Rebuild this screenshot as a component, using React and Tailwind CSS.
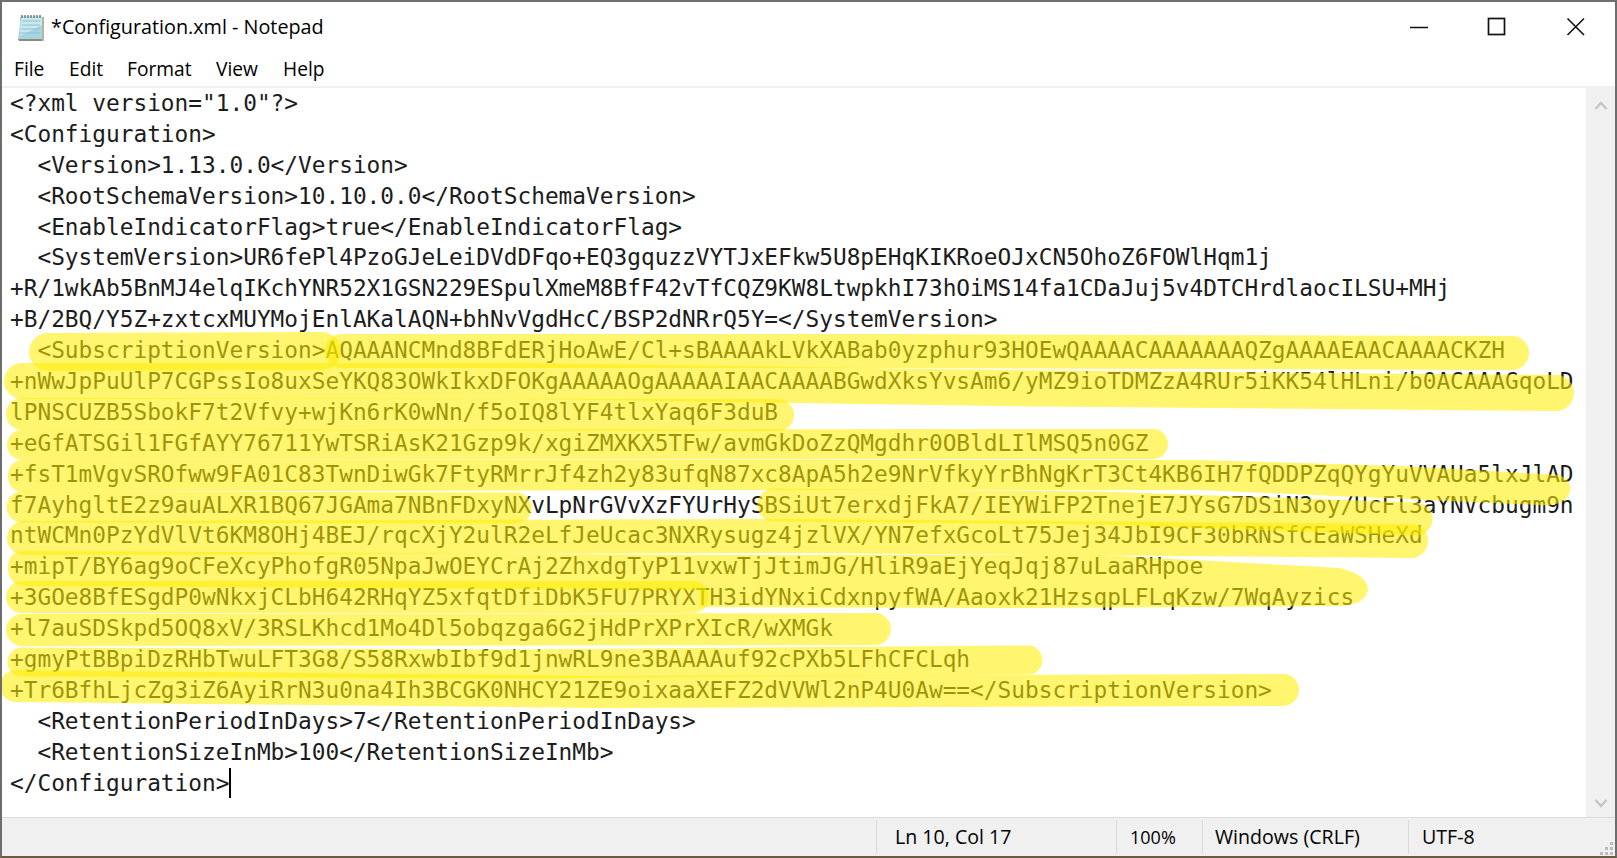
import React from "react";

const lines = [
  '<?xml version="1.0"?>',
  "<Configuration>",
  "  <Version>1.13.0.0</Version>",
  "  <RootSchemaVersion>10.10.0.0</RootSchemaVersion>",
  "  <EnableIndicatorFlag>true</EnableIndicatorFlag>",
  "  <SystemVersion>UR6fePl4PzoGJeLeiDVdDFqo+EQ3gquzzVYTJxEFkw5U8pEHqKIKRoeOJxCN5OhoZ6FOWlHqm1j",
  "+R/1wkAb5BnMJ4elqIKchYNR52X1GSN229ESpulXmeM8BfF42vTfCQZ9KW8LtwpkhI73hOiMS14fa1CDaJuj5v4DTCHrdlaocILSU+MHj",
  "+B/2BQ/Y5Z+zxtcxMUYMojEnlAKalAQN+bhNvVgdHcC/BSP2dNRrQ5Y=</SystemVersion>",
  "  <SubscriptionVersion>AQAAANCMnd8BFdERjHoAwE/Cl+sBAAAAkLVkXABab0yzphur93HOEwQAAAACAAAAAAAQZgAAAAEAACAAAACKZH",
  "+nWwJpPuUlP7CGPssIo8uxSeYKQ83OWkIkxDFOKgAAAAAOgAAAAAIAACAAAABGwdXksYvsAm6/yMZ9ioTDMZzA4RUr5iKK54lHLni/b0ACAAAGqoLD",
  "lPNSCUZB5SbokF7t2Vfvy+wjKn6rK0wNn/f5oIQ8lYF4tlxYaq6F3duB",
  "+eGfATSGil1FGfAYY76711YwTSRiAsK21Gzp9k/xgiZMXKX5TFw/avmGkDoZzQMgdhr0OBldLIlMSQ5n0GZ",
  "+fsT1mVgvSROfww9FA01C83TwnDiwGk7FtyRMrrJf4zh2y83ufqN87xc8ApA5h2e9NrVfkyYrBhNgKrT3Ct4KB6IH7fQDDPZqQYgYuVVAUa5lxJlAD",
  "f7AyhgltE2z9auALXR1BQ67JGAma7NBnFDxyNXvLpNrGVvXzFYUrHySBSiUt7erxdjFkA7/IEYWiFP2TnejE7JYsG7DSiN3oy/UcFl3aYNVcbugm9n",
  "ntWCMn0PzYdVlVt6KM8OHj4BEJ/rqcXjY2ulR2eLfJeUcac3NXRysugz4jzlVX/YN7efxGcoLt75Jej34JbI9CF30bRNSfCEaWSHeXd",
  "+mipT/BY6ag9oCFeXcyPhofgR05NpaJwOEYCrAj2ZhxdgTyP11vxwTjJtimJG/HliR9aEjYeqJqj87uLaaRHpoe",
  "+3GOe8BfESgdP0wNkxjCLbH642RHqYZ5xfqtDfiDbK5FU7PRYXTH3idYNxiCdxnpyfWA/Aaoxk21HzsqpLFLqKzw/7WqAyzics",
  "+l7auSDSkpd5OQ8xV/3RSLKhcd1Mo4Dl5obqzga6G2jHdPrXPrXIcR/wXMGk",
  "+gmyPtBBpiDzRHbTwuLFT3G8/S58RxwbIbf9d1jnwRL9ne3BAAAAuf92cPXb5LFhCFCLqh",
  "+Tr6BfhLjcZg3iZ6AyiRrN3u0na4Ih3BCGK0NHCY21ZE9oixaaXEFZ2dVVWl2nP4U0Aw==</SubscriptionVersion>",
  "  <RetentionPeriodInDays>7</RetentionPeriodInDays>",
  "  <RetentionSizeInMb>100</RetentionSizeInMb>",
];

const strokes = [
  { d: "M48 352 L322 351", w: 38 },
  { d: "M342 351 L900 351 L1512 353", w: 34 },
  { d: "M22 381 L520 381 L1000 388 L1556 393", w: 36 },
  { d: "M22 414 L778 415", w: 32 },
  { d: "M22 445 L1153 444", w: 30 },
  { d: "M22 507 L516 508", w: 31 },
  { d: "M774 505 L1100 508 L1416 519", w: 33 },
  { d: "M24 538 L800 536 L1411 541", w: 34 },
  { d: "M22 597 L693 597", w: 32 },
  { d: "M22 630 L875 629", w: 32 },
  { d: "M22 662 L500 664 L1028 660", w: 29 },
  { d: "M16 686 L600 692 L1283 690", w: 32 },
];

const fills = [
  "M8 476 C8 466 14 460 24 460 L1200 460 L1400 466 L1560 475 Q1578 485 1565 500 Q1555 507 1540 505 L1200 490 L700 490 L24 492 C14 492 8 486 8 476Z",
  "M8 568 Q8 551 24 551 L700 555 L1100 555 L1340 568 Q1368 575 1368 590 Q1365 605 1340 606 L1000 608 L700 607 L700 590 L24 586 Q8 584 8 568Z",
];

function NotepadIcon() {
  return (
    <svg width="29" height="29" viewBox="0 0 29 29">
      <rect x="4" y="4" width="24" height="24" fill="#b9b3a0" />
      <path d="M5 3 H26 V26 H2 Z" fill="#a5d5e0" />
      <path d="M5 3 H26 V12 L4 23 Z" fill="#c9e8ee" />
      <path d="M2 26 H26 V28 H3 Z" fill="#8e8a76" />
      <path d="M6 8 H24 M6 12 H24 M5 16 H24 M4 20 H24" stroke="#8fc0cd" strokeWidth="1" />
      <path d="M6 2 V5 M9 2 V5 M12 2 V5 M15 2 V5 M18 2 V5 M21 2 V5 M24 2 V5" stroke="#55626a" strokeWidth="1.2" />
    </svg>
  );
}

function StatusCell({ width, pad, children }) {
  return (
    <div className={`flex h-[34px] items-center border-l border-[#d9d9d9] ${width} ${pad}`}>{children}</div>
  );
}

export default function App() {
  return (
    <div className="relative flex h-[858px] w-[1617px] flex-col overflow-hidden border-x-2 border-t-[2px] border-b-[2px] border-x-[#6d6d6d] border-t-[#6f6f6f] border-b-[#6b5a44] bg-white font-['Open_Sans',sans-serif] text-black">
      <div className="flex h-[50px] shrink-0 items-center pl-[14px]">
        <NotepadIcon />
        <span className="ml-[6px] text-[19.8px] leading-none">*Configuration.xml - Notepad</span>
        <div className="ml-auto flex items-center">
          <svg width="20" height="20" viewBox="0 0 20 20" className="mr-[58px]">
            <path d="M1 10.5 H19" stroke="#111" strokeWidth="1.5" />
          </svg>
          <svg width="20" height="20" viewBox="0 0 20 20" className="mr-[59px]">
            <rect x="1.5" y="1.5" width="16" height="16" fill="none" stroke="#111" strokeWidth="1.7" />
          </svg>
          <svg width="20" height="20" viewBox="0 0 20 20" className="mr-[29px]">
            <path d="M1.5 1.5 L18 18 M18 1.5 L1.5 18" stroke="#111" strokeWidth="1.6" />
          </svg>
        </div>
      </div>

      <div className="flex h-[34px] shrink-0 items-center pl-[12px] text-[19.2px] leading-none">
        <span className="w-[55px]">File</span>
        <span className="w-[58px]">Edit</span>
        <span className="w-[89px]">Format</span>
        <span className="w-[67px]">View</span>
        <span>Help</span>
      </div>
      <div className="h-[2px] shrink-0 bg-[#f0f0f0]" />

      <div className="flex min-h-0 flex-1">
        <div className="relative flex-1 overflow-hidden pl-[8px] font-['DejaVu_Sans_Mono',monospace] text-[22.79px] leading-[30.9px] text-[#1c1c1c]">
          {lines.map((l, i) => (
            <div key={i} className="h-[30.9px] whitespace-pre">
              {l}
            </div>
          ))}
          <div className="flex h-[30.9px] items-center whitespace-pre">
            &lt;/Configuration&gt;
            <span className="h-[30px] w-[2px] bg-black" />
          </div>
        </div>
        <div className="flex w-[29px] shrink-0 flex-col items-center justify-between bg-[#f0f0f0] pb-[8px] pt-[12px]">
          <svg width="14" height="12" viewBox="0 0 14 12">
            <path d="M1.5 9 L7 3 L12.5 9" fill="none" stroke="#c4c4c4" strokeWidth="2.4" />
          </svg>
          <svg width="14" height="12" viewBox="0 0 14 12">
            <path d="M1.5 3 L7 9 L12.5 3" fill="none" stroke="#c4c4c4" strokeWidth="2.4" />
          </svg>
        </div>
      </div>

      <div className="relative flex h-[39px] shrink-0 items-center justify-end border-t border-[#dcdcdc] bg-[#f0f0f0] text-[19.6px] leading-none">
        <StatusCell width="w-[240px]" pad="pl-[18px]">Ln 10, Col 17</StatusCell>
        <StatusCell width="w-[86px]" pad="pl-[13px] text-[18px]">100%</StatusCell>
        <StatusCell width="w-[206px]" pad="pl-[12px]">Windows (CRLF)</StatusCell>
        <StatusCell width="w-[207px]" pad="pl-[13px]">UTF-8</StatusCell>
        <svg width="14" height="14" viewBox="0 0 14 14" className="absolute bottom-[1px] right-[1px]">
          <g fill="#bcbcbc">
            <rect x="10" y="1" width="3" height="3" />
            <rect x="5" y="6" width="3" height="3" />
            <rect x="10" y="6" width="3" height="3" />
            <rect x="0" y="11" width="3" height="3" />
            <rect x="5" y="11" width="3" height="3" />
            <rect x="10" y="11" width="3" height="3" />
          </g>
        </svg>
      </div>

      <svg
        className="pointer-events-none absolute left-[-2px] top-[-2px]"
        width="1617"
        height="858"
        viewBox="0 0 1617 858"
      >
        {strokes.map((s, i) => (
          <path
            key={i}
            d={s.d}
            fill="none"
            stroke="#ffee00"
            strokeOpacity="0.57"
            strokeWidth={s.w}
            strokeLinecap="round"
            strokeLinejoin="round"
          />
        ))}
        {fills.map((d, i) => (
          <path key={i} d={d} fill="#ffee00" fillOpacity="0.57" />
        ))}
      </svg>
    </div>
  );
}
